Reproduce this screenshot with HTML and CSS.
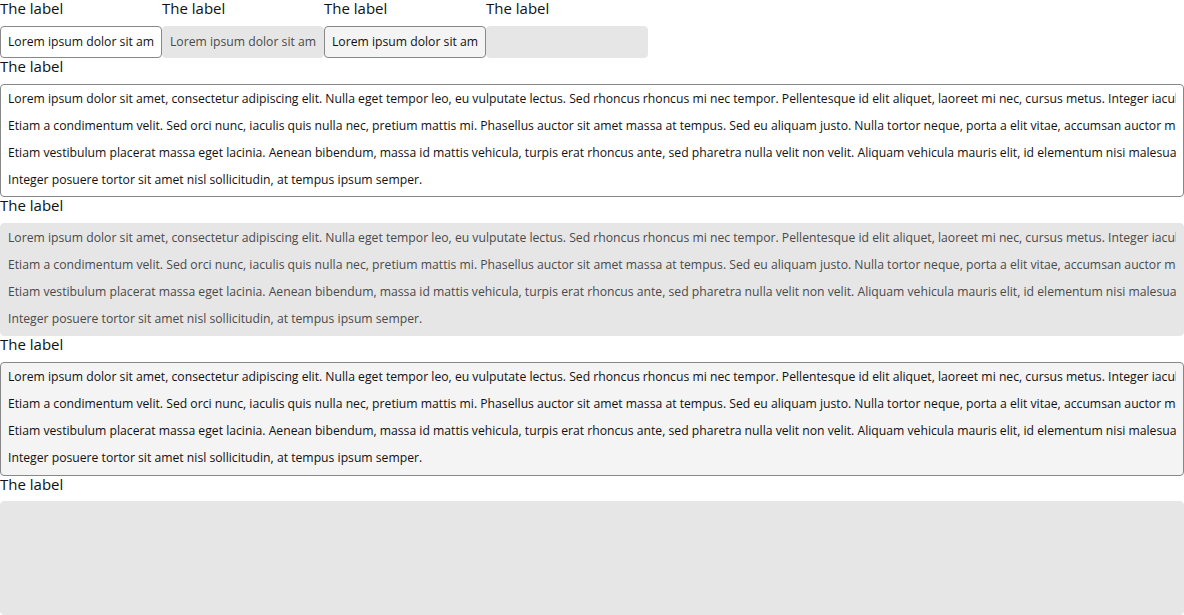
FILE: index.html
```html
<!DOCTYPE html>
<html>
<head>
<meta charset="utf-8">
<link rel="stylesheet" href="styles.css">
</head>
<body>
<div class="row">
  <div class="field">
    <label class="label">The label</label>
    <div class="input"><span class="value">Lorem ipsum dolor sit amet</span></div>
  </div>
  <div class="field">
    <label class="label">The label</label>
    <div class="input disabled"><span class="value">Lorem ipsum dolor sit amet</span></div>
  </div>
  <div class="field">
    <label class="label">The label</label>
    <div class="input readonly"><span class="value">Lorem ipsum dolor sit amet</span></div>
  </div>
  <div class="field">
    <label class="label">The label</label>
    <div class="input disabled"><span class="value"></span></div>
  </div>
</div>
<div class="field">
  <label class="label">The label</label>
  <div class="area">
    <p>Lorem ipsum dolor sit amet, consectetur adipiscing elit. Nulla eget tempor leo, eu vulputate lectus. Sed rhoncus rhoncus mi nec tempor. Pellentesque id elit aliquet, laoreet mi nec, cursus metus. Integer iaculis nisl eget turpis.</p>
    <p>Etiam a condimentum velit. Sed orci nunc, iaculis quis nulla nec, pretium mattis mi. Phasellus auctor sit amet massa at tempus. Sed eu aliquam justo. Nulla tortor neque, porta a elit vitae, accumsan auctor mauris.</p>
    <p>Etiam vestibulum placerat massa eget lacinia. Aenean bibendum, massa id mattis vehicula, turpis erat rhoncus ante, sed pharetra nulla velit non velit. Aliquam vehicula mauris elit, id elementum nisi malesuada at.</p>
    <p>Integer posuere tortor sit amet nisl sollicitudin, at tempus ipsum semper.</p>
  </div>
</div>
<div class="field">
  <label class="label">The label</label>
  <div class="area disabled">
    <p>Lorem ipsum dolor sit amet, consectetur adipiscing elit. Nulla eget tempor leo, eu vulputate lectus. Sed rhoncus rhoncus mi nec tempor. Pellentesque id elit aliquet, laoreet mi nec, cursus metus. Integer iaculis nisl eget turpis.</p>
    <p>Etiam a condimentum velit. Sed orci nunc, iaculis quis nulla nec, pretium mattis mi. Phasellus auctor sit amet massa at tempus. Sed eu aliquam justo. Nulla tortor neque, porta a elit vitae, accumsan auctor mauris.</p>
    <p>Etiam vestibulum placerat massa eget lacinia. Aenean bibendum, massa id mattis vehicula, turpis erat rhoncus ante, sed pharetra nulla velit non velit. Aliquam vehicula mauris elit, id elementum nisi malesuada at.</p>
    <p>Integer posuere tortor sit amet nisl sollicitudin, at tempus ipsum semper.</p>
  </div>
</div>
<div class="field">
  <label class="label">The label</label>
  <div class="area readonly">
    <p>Lorem ipsum dolor sit amet, consectetur adipiscing elit. Nulla eget tempor leo, eu vulputate lectus. Sed rhoncus rhoncus mi nec tempor. Pellentesque id elit aliquet, laoreet mi nec, cursus metus. Integer iaculis nisl eget turpis.</p>
    <p>Etiam a condimentum velit. Sed orci nunc, iaculis quis nulla nec, pretium mattis mi. Phasellus auctor sit amet massa at tempus. Sed eu aliquam justo. Nulla tortor neque, porta a elit vitae, accumsan auctor mauris.</p>
    <p>Etiam vestibulum placerat massa eget lacinia. Aenean bibendum, massa id mattis vehicula, turpis erat rhoncus ante, sed pharetra nulla velit non velit. Aliquam vehicula mauris elit, id elementum nisi malesuada at.</p>
    <p>Integer posuere tortor sit amet nisl sollicitudin, at tempus ipsum semper.</p>
  </div>
</div>
<div class="field">
  <label class="label">The label</label>
  <div class="area disabled"></div>
</div>
</body>
</html>
```
FILE: styles.css
```css
* { box-sizing: border-box; }
html, body { margin: 0; padding: 0; background: #fff; }
body {
  font-family: "Open Sans", "Noto Sans", sans-serif;
  color: #111;
  width: 1184px;
}
.row { display: flex; }
.row .field { width: 162px; }
.field { display: flex; flex-direction: column; }
.label {
  display: block;
  font-size: 15px;
  line-height: 16px;
  height: 25.75px;
  color: #111;
}
.input {
  height: 32px;
  border: 1px solid #888;
  border-radius: 4px;
  padding: 0 7px;
  font-size: 12.2px;
  line-height: 30px;
  background: #fff;
  color: #111;
}
.value {
  display: block;
  white-space: nowrap;
  overflow: hidden;
}
.input.disabled, .area.disabled {
  background: #e6e6e6;
  border-color: #e6e6e6;
  color: #4a4a4a;
}
.input.readonly, .area.readonly {
  background: #f4f4f4;
}
.area {
  height: 113.5px;
  border: 1px solid #888;
  border-radius: 4px;
  padding: 0 7px;
  font-size: 12.2px;
  line-height: 27px;
  background: #fff;
  color: #111;
}
.area p {
  margin: 0;
  height: 27px;
  white-space: nowrap;
  overflow: hidden;
}
```
